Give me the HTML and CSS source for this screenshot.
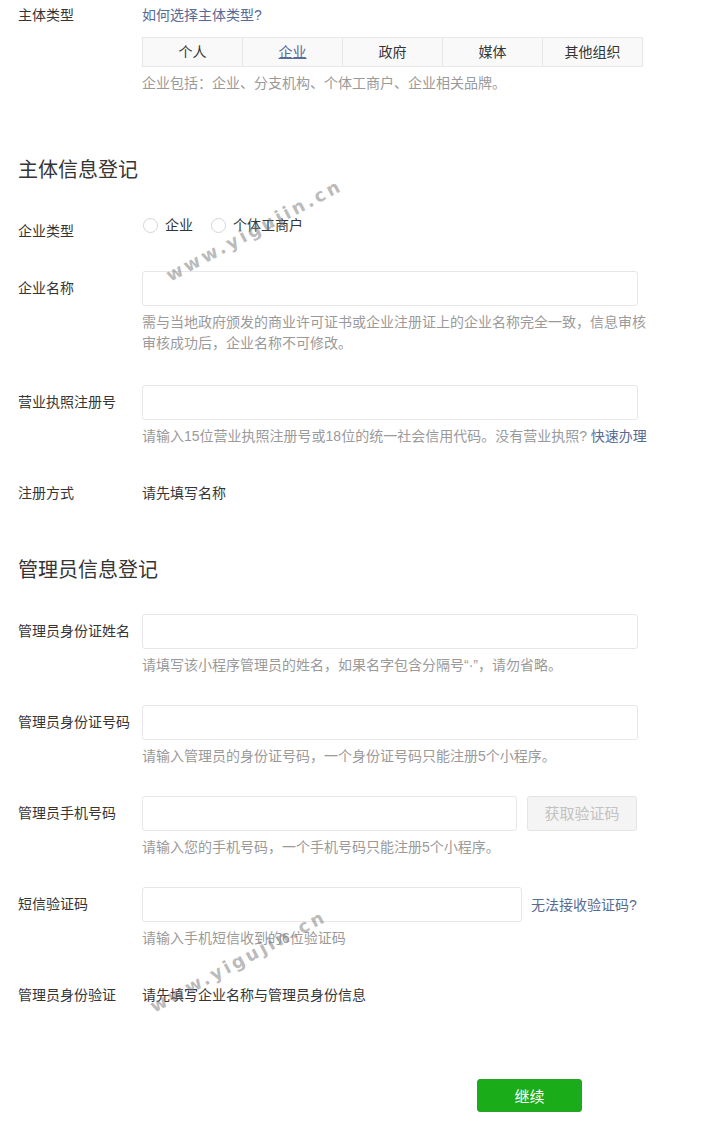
FILE: index.html
```html
<!DOCTYPE html>
<html lang="zh-CN">
<head>
    <meta charset="UTF-8">
    <meta name="viewport" content="width=device-width, initial-scale=1.0">
    <title>小程序注册 - 信息登记</title>
    <link rel="stylesheet" href="styles.css">
</head>
<body>

<div class="page">

    <!-- 主体类型 -->
    <div class="form-row row-type">
        <div class="label">主体类型</div>
        <div class="field">
            <a class="link" href="#">如何选择主体类型?</a>
            <div class="tabs">
                <span class="tab">个人</span>
                <span class="tab active">企业</span>
                <span class="tab">政府</span>
                <span class="tab">媒体</span>
                <span class="tab">其他组织</span>
            </div>
            <p class="hint">企业包括：企业、分支机构、个体工商户、企业相关品牌。</p>
        </div>
    </div>

    <h2 class="section-title first">主体信息登记</h2>

    <div class="form-row row-radio">
        <div class="label">企业类型</div>
        <div class="field radios">
            <label class="radio"><span class="radio-dot"></span>企业</label>
            <label class="radio"><span class="radio-dot"></span>个体工商户</label>
        </div>
    </div>

    <div class="form-row row-input gap-30">
        <div class="label">企业名称</div>
        <div class="field">
            <input class="input" type="text">
            <p class="hint">需与当地政府颁发的商业许可证书或企业注册证上的企业名称完全一致，信息审核<br>审核成功后，企业名称不可修改。</p>
        </div>
    </div>

    <div class="form-row row-input gap-31">
        <div class="label">营业执照注册号</div>
        <div class="field">
            <input class="input" type="text">
            <p class="hint">请输入15位营业执照注册号或18位的统一社会信用代码。没有营业执照? <a class="link" href="#">快速办理</a></p>
        </div>
    </div>

    <div class="form-row row-text">
        <div class="label">注册方式</div>
        <div class="field value">请先填写名称</div>
    </div>

    <h2 class="section-title">管理员信息登记</h2>

    <div class="form-row row-input gap-30">
        <div class="label">管理员身份证姓名</div>
        <div class="field">
            <input class="input" type="text">
            <p class="hint">请填写该小程序管理员的姓名，如果名字包含分隔号“·”，请勿省略。</p>
        </div>
    </div>

    <div class="form-row row-input gap-29">
        <div class="label">管理员身份证号码</div>
        <div class="field">
            <input class="input" type="text">
            <p class="hint">请输入管理员的身份证号码，一个身份证号码只能注册5个小程序。</p>
        </div>
    </div>

    <div class="form-row row-input gap-29">
        <div class="label">管理员手机号码</div>
        <div class="field">
            <div class="input-line">
                <input class="input input-phone" type="text">
                <button class="btn-code" type="button" disabled>获取验证码</button>
            </div>
            <p class="hint">请输入您的手机号码，一个手机号码只能注册5个小程序。</p>
        </div>
    </div>

    <div class="form-row row-input gap-29">
        <div class="label">短信验证码</div>
        <div class="field">
            <div class="input-line">
                <input class="input input-sms" type="text">
                <a class="link sms-link" href="#">无法接收验证码?</a>
            </div>
            <p class="hint">请输入手机短信收到的6位验证码</p>
        </div>
    </div>

    <div class="form-row row-text">
        <div class="label">管理员身份验证</div>
        <div class="field value">请先填写企业名称与管理员身份信息</div>
    </div>

    <div class="form-footer">
        <button class="btn-primary" type="button">继续</button>
    </div>

    <!-- 水印 -->
    <span class="watermark mark-top">www.yigujin.cn</span>
    <span class="watermark mark-bottom">www.yigujin.cn</span>
</div>

</body>
</html>
```

FILE: styles.css
```css
body {
    margin: 0;
    padding: 0;
    background-color: #fff;
    font-family: "Liberation Sans", "Noto Sans CJK SC", sans-serif;
    font-size: 14px;
    color: #353535;
}
.page {
    position: relative;
    padding: 5px 0 0 18px;
    height: 1116px;
    overflow: hidden;
}
.form-row {
    display: flex;
    align-items: flex-start;
}
.label {
    width: 124px;
    flex-shrink: 0;
    line-height: 20px;
    color: #353535;
}
.field {
    line-height: 20px;
}
.link {
    color: #576b95;
    text-decoration: none;
}
.hint {
    margin: 6px 0 0;
    width: 510px;
    line-height: 21px;
    color: #9a9a9a;
}

/* 主体类型 */
.tabs {
    display: flex;
    width: 499px;
    margin-top: 12px;
    border: 1px solid #e7e7eb;
    background-color: #f9f9f9;
}
.tab {
    flex: 1;
    height: 28px;
    line-height: 28px;
    text-align: center;
    border-left: 1px solid #e7e7eb;
    color: #353535;
}
.tab:first-child {
    border-left: none;
}
.tab.active {
    color: #576b95;
    text-decoration: underline;
}
.row-type .hint {
    line-height: 20px;
}

.section-title {
    margin: 53px 0 0;
    font-size: 20px;
    font-weight: normal;
    line-height: 28px;
    color: #353535;
}
.section-title.first {
    margin-top: 63px;
}

/* 企业类型 */
.row-radio {
    margin-top: 31px;
}
.row-radio .label {
    padding-top: 6px;
}
.radios {
    display: flex;
    gap: 17px;
}
.radio {
    display: flex;
    align-items: center;
    gap: 7px;
    color: #353535;
}
.radio-dot {
    width: 15px;
    height: 15px;
    box-sizing: border-box;
    border: 1px solid #d5d5d5;
    border-radius: 50%;
    margin-left: 1px;
}

/* 输入框 */
.row-input .label {
    line-height: 35px;
}
.gap-29 { margin-top: 29px; }
.gap-30 { margin-top: 30px; }
.gap-31 { margin-top: 31px; }
.input {
    display: block;
    width: 496px;
    height: 35px;
    box-sizing: border-box;
    margin: 0;
    padding: 0 10px;
    border: 1px solid #e7e7eb;
    border-radius: 3px;
    background-color: #fff;
    font: inherit;
    outline: none;
}
.input-line {
    display: flex;
    align-items: center;
}
.input-phone {
    width: 375px;
}
.input-sms {
    width: 380px;
}
.btn-code {
    width: 110px;
    height: 35px;
    margin-left: 10px;
    border: 1px solid #e4e4e4;
    border-radius: 3px;
    background-color: #f4f4f4;
    color: #c2c2c2;
    font: inherit;
    font-size: 15px;
}
.sms-link {
    margin-left: 9px;
}

/* 纯文本行 */
.row-text {
    margin-top: 36px;
}

.form-footer {
    margin-top: 74px;
    padding-left: 459px;
}
.btn-primary {
    width: 105px;
    height: 33px;
    border: 1px solid #2a9f29;
    border-radius: 3px;
    background-color: #1aad19;
    color: #fff;
    font: inherit;
    font-size: 15px;
}

.watermark {
    position: absolute;
    font-family: "DejaVu Sans", sans-serif;
    font-size: 18px;
    font-weight: bold;
    letter-spacing: 3px;
    color: rgba(120, 120, 120, 0.5);
    white-space: nowrap;
    transform: translate(-50%, -50%) rotate(-28deg);
}
.mark-top {
    left: 254px;
    top: 230px;
}
.mark-bottom {
    left: 238px;
    top: 961px;
}
```
